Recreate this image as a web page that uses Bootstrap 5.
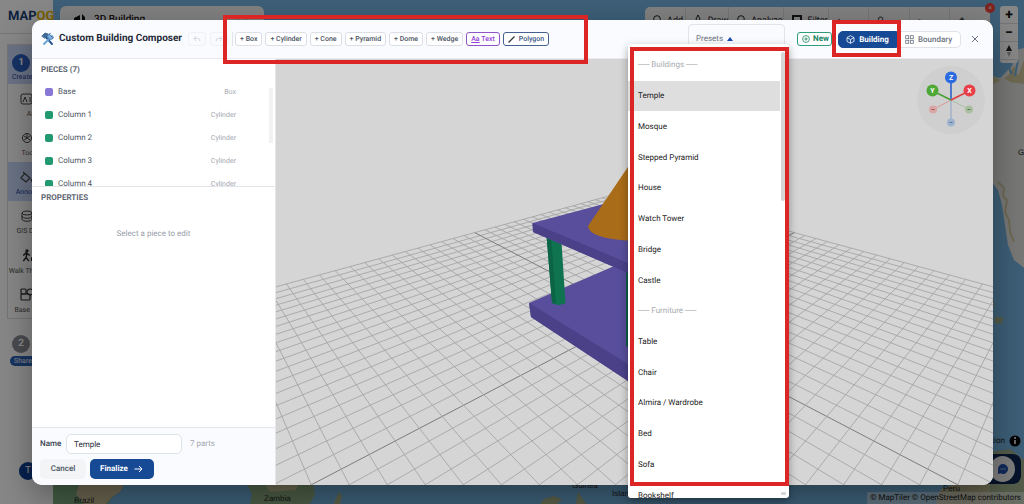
<!DOCTYPE html>
<html lang="en">
<head>
<meta charset="utf-8">
<meta name="viewport" content="width=device-width, initial-scale=1">
<title>Custom Building Composer</title>
<link href="https://cdn.jsdelivr.net/npm/bootstrap@5.3.0/dist/css/bootstrap.min.css" rel="stylesheet">
<style>
:root{--navy:#174a94;--line:#e2e5ea;--hint:#dc2626}
html,body{height:100%}
body{font-family:Roboto,"Liberation Sans",sans-serif;font-size:8px;line-height:12px;color:#374151;overflow:hidden;background:#7abbe9;text-rendering:geometricPrecision}
button,input{font-family:inherit;text-rendering:inherit}
svg{display:block}
/* application behind the dialog */
.backdrop-app{position:absolute;inset:0}
.map-art{position:absolute;inset:0;width:100%;height:100%}
.side-rail{width:53px;background:#fff;position:relative}
.brand-line{height:34px;font:bold 13px/34px Roboto,sans-serif;padding-left:8px;color:#1c3f77;border-bottom:1px solid #ddd}
.brand-line span{color:#e4b400}
.rail-box{margin:10px 0 0 7px;border:1px solid #ddd;font-size:7px;line-height:10px;color:#555}
.rail-item{height:39px;padding-top:9px;white-space:nowrap;text-align:center;width:44px}
.rail-item svg{margin:0 0 4px 12px}
.rail-on{background:#c9d9fb;color:#1c3f9a}
.step-dot{width:18px;height:18px;border-radius:50%;background:#2b5fc0;color:#fff;font:bold 10px/18px Roboto,sans-serif;text-align:center}
.share-tag{background:#2b62b8;color:#fff;border-radius:5px;font-size:7px;line-height:10px;width:26px;text-align:center}
.user-dot{width:18px;height:18px;border-radius:50%;background:#0d3f96;color:#fff;font-size:10px;line-height:18px;text-align:center}
.top-panel{margin:6px 0 0 7px;width:204px;height:40px;background:#f4f4f4;border-radius:6px;padding:8px 14px;font-size:10px;font-weight:500;color:#111}
.top-tools{position:absolute;left:63%;right:34px;top:7px;height:40px;background:#f4f4f4;border-radius:5px;font-size:9px;color:#222}
.top-tools>span{flex:1;border-right:1px solid #ddd;padding:8px 0 0 8px;gap:6px}
.alert-dot{position:absolute;right:-5px;top:-4px;width:10px;height:10px;border-radius:50%;background:#f0443c;color:#fff;font-size:7px;line-height:10px;text-align:center}
.zoom-stack{position:absolute;right:6px;top:6px;width:18px;border-radius:3px;background:#fff;overflow:hidden}
.zoom-stack button{height:18px;width:18px;border:0;border-bottom:1px solid #ddd;background:none;padding:0;font:bold 14px/16px Roboto,sans-serif;color:#111}
.map-info{position:absolute;right:3px;bottom:57px;color:#222;gap:4px}
.chat-box{position:absolute;right:3px;bottom:20px;width:50px;height:30px;border-radius:8px;background:#0d2450;padding:2px 6px}
.chat-face{width:25px;height:26px;border-radius:50%;background:#eee}
.credit{position:absolute;right:0;bottom:0;background:rgba(255,255,255,.45);padding:0 3px;color:#222}
.credit a{color:inherit;text-decoration:none}
.dim{position:absolute;inset:0;background:rgba(0,0,0,.47)}
/* dialog */
.composer{position:absolute;inset:20px 31px 19px 32px;border-radius:10px;background:#fff;box-shadow:0 12px 34px rgba(0,0,0,.35)}
.composer-head{height:39px;background:#fafbfe;border-bottom:1px solid #e9ebf0;border-radius:10px 10px 0 0;padding:0 14px 0 9px;position:relative;z-index:3}
.composer-title{font-size:10px;line-height:14px;font-weight:700;color:#1f2937;margin:0 0 0 4px;width:129px;white-space:nowrap}
.ghost-btn{width:18px;height:14px;padding:0;border:1px solid #f0f1f4;border-radius:3px;background:transparent;color:#d5d8de}
.tool-btn{height:14px;padding:0 4px;border:1px solid #dcdfe5;border-radius:3px;background:#fff;font-size:7px;line-height:12px;font-weight:500;color:#4b5563;white-space:nowrap}
.tool-text{border-color:#8f55c8;color:#9042d8}
.tool-poly{border-color:#45618f;color:#3b567f}
.shape-tools{gap:3px;border-left:1px solid #e2e5ea;padding-left:2px;position:relative}
.hint-box{position:absolute;border:4px solid var(--hint);pointer-events:none;z-index:6}
.hint-tools{inset:-17px auto -18px -10px;width:365px}
.hint-mode{inset:-11px 60px -9px -6px}
.hint-menu{inset:3px 0 12px 2px}
.preset-wrap{position:relative;height:30px;width:97px;margin-left:auto}
.preset-btn{width:100%;height:100%;border:1px solid #e2e4ea;border-radius:4px;background:#fafbfe;text-align:left;color:#6b7280;padding:0 7px;gap:4px}
.preset-menu{position:absolute;top:20px;left:-60px;width:161px;height:454px;border-radius:3px;background:#fff;box-shadow:0 3px 9px rgba(0,0,0,.35);z-index:5}
.preset-clip{height:100%;overflow:hidden;padding-top:6px;border-radius:3px}
.preset-list{height:461px;margin:0 9px 0 0;padding:0;list-style:none}
.preset-list li{flex:1;padding-left:10px;color:#222}
.preset-list li.group-name{color:#a8abb0}
.preset-list li.on{background:#dedede}
.menu-thumb{position:absolute;right:4px;top:8px;width:4px;height:149px;background:#d6d6d6;border-radius:2px}
.menu-end{position:absolute;right:3px;bottom:3px;width:5px;height:3px;border-radius:1px;background:#d6d6d6}
.new-btn{height:14px;width:35px;margin:0 6px 0 12px;padding:0 4px;border:1px solid #2e9c78;border-radius:3px;background:#fff;color:#16845f;line-height:12px;font-weight:700;gap:3px}
.new-btn svg{flex:none}
.mode-switch{position:relative;height:17px}
.mode-switch button{height:17px;line-height:15px;padding:0 9px;gap:4px;border:1px solid #dfe2e8;background:#fff;color:#6b7280;font-weight:500}
.mode-switch .mode-a{border-radius:5px 0 0 5px;background:var(--navy);border-color:var(--navy);color:#fff;font-weight:700;width:59px;justify-content:center;padding:0}
.mode-switch .mode-b{border-radius:0 5px 5px 0;border-left:0;width:64px;justify-content:center;padding:0}
.close-btn{border:0;background:none;padding:0;margin-left:10px;color:#6b7280}
.composer-body{height:calc(100% - 39px)}
.side-pane{width:244px;border-right:1px solid #e5e7eb}
.pieces-part{height:128px;border-bottom:1px solid var(--line);overflow:hidden;position:relative}
.pane-label{font-size:8px;line-height:12px;font-weight:700;color:#5f6774;margin:0;padding:5px 9px 4px}
.piece-row{height:23px;padding:0 39px 0 13px;color:#4b5563}
.piece-chip{width:8px;height:8px;border-radius:2px;background:#22996f;margin-right:5px}
.piece-kind{font-size:7px;color:#a3a8b1;margin-left:auto}
.pane-thumb{position:absolute;right:2px;top:29px;width:4px;height:55px;background:#f2f2f3}
.composer-foot{background:#fafbfe;border-top:1px solid var(--line);border-radius:0 0 0 10px;padding:6px 8px 6px;height:58px}
.name-label{width:26px}
.name-field{width:116px;height:20px;border:1px solid #dfe2e8;border-radius:5px;padding:0 7px;color:#1f2937;background:#fff}
.cancel-btn,.final-btn{height:20px;border:0;border-radius:5px;line-height:20px;font-weight:500;padding:0 10px}
.cancel-btn{background:#f3f4f6;color:#4b5563;width:46px}
.final-btn{background:var(--navy);color:#fff;font-weight:700;gap:6px;width:64px}
.scene{background:#d5d5d5;border-radius:0 0 10px 0;overflow:hidden;position:relative}
.scene svg{position:absolute;inset:0;width:100%;height:100%}
.scene .axis-gizmo{inset:6px 7px auto auto;width:70px;height:70px}
</style>
<script src="https://cdn.jsdelivr.net/npm/bootstrap@5.3.0/dist/js/bootstrap.bundle.min.js"></script>
</head>
<body>
<div class="backdrop-app d-flex" aria-hidden="true">
  <svg class="map-art" viewBox="0 0 1024 504" preserveAspectRatio="none">
    <rect width="1024" height="504" fill="#74b3e0"/>
    <path d="M53 480H126L120 492 112 497 108 504H53Z" fill="#7fae83"/>
    <path d="M80 480H126L120 492 112 497 106 504H84L76 494Z" fill="#c9bd96"/>
    <path d="M245 480H312L315 494 310 504H250L252 494Z" fill="#8fae83"/>
    <path d="M262 480H300L296 490 270 492Z" fill="#c3bd92"/>
    <path d="M335 500l4-8 3 4-2 8h-6ZM540 504l4-5 10-3 8 3-5 5ZM576 504l2-12 4 6 4 6Z" fill="#a9b38a"/>
    <path d="M936 504L940 490 958 482 990 480 1024 484V504Z" fill="#b9b58e"/>
    <path d="M990 452L1010 449 1024 460V504H990Z" fill="#9fae8a"/>
    <path d="M990 76L1000 78 1012 66 1016 50 1024 48V268L1014 260 1008 245 1005 225 1002 205 998 190 990 180Z" fill="#e2e2df"/>
    <path d="M990 74L1000 80 1008 76 1014 66 1018 76 1024 60V84L1010 82 1004 78 994 84 990 80Z" fill="#cfc69c"/>
    <path d="M996 60l8 14M1006 62l6 12M1018 60l-3 16" stroke="#74b3e0" stroke-width="2"/>
    <path d="M998 182l6 6-1 8 4 4-2 12 4 8 1 12 4 10" fill="none" stroke="#cfc69c" stroke-width="2"/>
    <path d="M993 301l2 6M995 317l8 1-2 5-6 0ZM1002 324h2" stroke="#9fae8a" fill="#9fae8a"/>
    <g font-family="Liberation Sans" font-size="8" fill="#222"><text x="74" y="503">Brazil</text><text x="264" y="501">Zambia</text><text x="572" y="488">Guinea</text><text x="612" y="496">Islands</text><text x="943" y="491">Peru</text><text x="1018" y="155">G</text></g>
  </svg>
  <div class="side-rail">
    <div class="brand-line">MAP<span>OG</span></div>
    <div class="rail-box">
      <div class="rail-item rail-on d-flex flex-column"><span class="step-dot ms-1">1</span><span class="text-start ps-1">Create</span></div>
      <div class="rail-item"><svg width="14" height="12" viewBox="0 0 14 12" fill="none" stroke="#444"><rect x="1" y="1" width="11" height="10" rx="2"/><path d="M3 9l2-5 2 5M10 4v5"/></svg>AI</div>
      <div class="rail-item"><svg width="14" height="12" viewBox="0 0 14 12" fill="none" stroke="#444"><circle cx="7" cy="6" r="4.5"/><path d="M4 4l6 4M4 8l6-4M7 2v3"/></svg>Tools</div>
      <div class="rail-item rail-on"><svg width="14" height="12" viewBox="0 0 14 12" fill="none" stroke="#444" stroke-width="1.2"><path d="M3 1l7 6-4 4-5-4 4-5M11 8l1 3"/></svg>Annotate</div>
      <div class="rail-item"><svg width="14" height="12" viewBox="0 0 14 12" fill="none" stroke="#444"><ellipse cx="7" cy="3" rx="5" ry="2"/><path d="M2 3v6c0 3 10 3 10 0V3M2 6c0 3 10 3 10 0"/></svg>GIS Data</div>
      <div class="rail-item"><svg width="14" height="13" viewBox="0 0 14 14" fill="none" stroke="#222" stroke-width="1.5"><circle cx="7" cy="2" r="1"/><path d="M7 4l-1 5-3 4M6 9l3 4M3 7l3-3 4 3M12 9v4"/></svg>Walk Through</div>
      <div class="rail-item"><svg width="14" height="13" viewBox="0 0 14 13" fill="none" stroke="#333" stroke-width="1.2"><rect x="1" y="1" width="5" height="5" rx="1"/><circle cx="10" cy="4" r="3"/><rect x="1" y="6" width="9" height="6" rx="1"/></svg>Base Map</div>
    </div>
    <div class="step-dot" style="margin:16px 0 3px 12px;background:#8c8f96">2</div>
    <div class="share-tag" style="margin-left:10px">Share</div>
    <div class="user-dot" style="margin:96px 0 0 19px">T</div>
  </div>
  <div class="top-panel position-relative d-flex gap-2"><svg width="12" height="12" viewBox="0 0 12 12"><path d="M0 4L6 1V12H0ZM8 0l3 3v9H8Z" fill="#111"/></svg>3D Building<span class="ms-auto">⌄⌄</span></div>
  <div class="top-tools d-flex">
    <span class="d-flex"><svg width="8" height="8" viewBox="0 0 8 8"><circle cx="4" cy="4" r="3.3" fill="none" stroke="#222"/></svg>Add</span>
    <span class="d-flex"><svg width="8" height="8" viewBox="0 0 8 8"><path d="M4 0L6 4 4 8 2 4Z" fill="none" stroke="#222"/></svg>Draw</span>
    <span class="d-flex"><svg width="8" height="8" viewBox="0 0 8 8"><circle cx="4" cy="4" r="3.3" fill="none" stroke="#222"/></svg>Analyze</span>
    <span class="d-flex"><svg width="10" height="8" viewBox="0 0 10 8"><path d="M0 1h10M1 1v6h8V1" fill="none" stroke="#222" stroke-width="2"/></svg>Filter</span>
    <span>▴</span><span>⚲</span><span>◦</span><span class="border-0">◈</span>
    <i class="alert-dot fst-normal">×</i>
  </div>
  <div class="zoom-stack"><button tabindex="-1">+</button><button tabindex="-1">−</button><button tabindex="-1"><svg class="mx-auto" width="6" height="12" viewBox="0 0 6 12"><path d="M3 0L6 6H0Z" fill="#222"/><path d="M3 12L5 7H1Z" fill="#aaa"/></svg></button></div>
  <div class="map-info d-flex align-items-center">Location <svg width="12" height="12" viewBox="0 0 12 12"><circle cx="6" cy="6" r="5.5" fill="#000"/><path d="M6 5v4" stroke="#fff" stroke-width="1.5"/><circle cx="6" cy="3" r="1" fill="#fff"/></svg></div>
  <div class="chat-box d-flex justify-content-end"><span class="chat-face d-flex align-items-center justify-content-center"><svg width="12" height="12" viewBox="0 0 12 12"><path d="M6 1a5 5 0 1 1-2.500 9.300L1 11V6A5 5 0 0 1 6 1Z" fill="#1d4faa"/><path d="M3.500 6h5" stroke="#fff" stroke-dasharray="1 1"/></svg></span></div>
  <div class="credit"><a href="#" tabindex="-1">© MapTiler</a> <a href="#" tabindex="-1">© OpenStreetMap contributors</a></div>
  <div class="dim"></div>
</div>

<main class="composer" role="dialog" aria-labelledby="composer-title">
  <header class="composer-head d-flex align-items-center">
    <svg width="14" height="14" viewBox="0 0 14 14" fill="none" stroke-linecap="round"><path d="M3 3l8 9" stroke="#2b5c94" stroke-width="2"/><path d="M1 4l3-3 3 1-1 1 .5 1L4 6Z" fill="#3d6e9e" stroke="#2b4f75" stroke-width=".7"/><path d="M11 4L3 12" stroke="#6ea4d8" stroke-width="2"/><path d="M9 1.500a3 3 0 1 0 3.500 3.500L11 5 9 3Z" fill="#7fb2e0" stroke="#2b5c94" stroke-width=".7"/></svg>
    <h1 class="composer-title" id="composer-title">Custom Building Composer</h1>
    <div class="d-flex gap-1">
      <button class="ghost-btn" aria-label="Undo" disabled><svg class="mx-auto" width="8" height="8" viewBox="0 0 8 8" fill="none" stroke="currentColor"><path d="M3 1L1 3.500 3 6M1 3.500h4q2 0 2 3"/></svg></button>
      <button class="ghost-btn" aria-label="Redo" disabled><svg class="mx-auto" width="8" height="8" viewBox="0 0 8 8" fill="none" stroke="currentColor"><path d="M5 1l2 2.500L5 6M7 3.500H3q-2 0-2 3"/></svg></button>
    </div>
    <div class="shape-tools d-flex ms-1">
      <button class="tool-btn">+ Box</button><button class="tool-btn">+ Cylinder</button><button class="tool-btn">+ Cone</button><button class="tool-btn">+ Pyramid</button><button class="tool-btn">+ Dome</button><button class="tool-btn">+ Wedge</button>
      <button class="tool-btn tool-text"><u>Aa</u> Text</button>
      <button class="tool-btn tool-poly d-flex align-items-center gap-1"><svg width="7" height="7" viewBox="0 0 7 7"><path d="M.5 6.500L6.500 .5" stroke="#333" stroke-width="1.300"/></svg>Polygon</button>
      <span class="hint-box hint-tools"></span>
    </div>
    <div class="preset-wrap">
      <button class="preset-btn d-flex align-items-center" aria-haspopup="listbox" aria-expanded="true">Presets <svg width="6" height="4" viewBox="0 0 6 4"><path d="M0 4L3 0 6 4Z" fill="#1548b0"/></svg></button>
      <div class="preset-menu">
        <div class="preset-clip">
          <ul class="preset-list d-flex flex-column" role="listbox" aria-label="Presets">
            <li class="group-name d-flex align-items-center">── Buildings ──</li>
            <li class="on d-flex align-items-center" role="option" aria-selected="true">Temple</li>
            <li class="d-flex align-items-center" role="option">Mosque</li>
            <li class="d-flex align-items-center" role="option">Stepped Pyramid</li>
            <li class="d-flex align-items-center" role="option">House</li>
            <li class="d-flex align-items-center" role="option">Watch Tower</li>
            <li class="d-flex align-items-center" role="option">Bridge</li>
            <li class="d-flex align-items-center" role="option">Castle</li>
            <li class="group-name d-flex align-items-center">── Furniture ──</li>
            <li class="d-flex align-items-center" role="option">Table</li>
            <li class="d-flex align-items-center" role="option">Chair</li>
            <li class="d-flex align-items-center" role="option">Almira / Wardrobe</li>
            <li class="d-flex align-items-center" role="option">Bed</li>
            <li class="d-flex align-items-center" role="option">Sofa</li>
            <li class="d-flex align-items-center" role="option">Bookshelf</li>
          </ul>
        </div>
        <i class="menu-thumb"></i><i class="menu-end"></i>
        <span class="hint-box hint-menu"></span>
      </div>
    </div>
    <button class="new-btn d-flex align-items-center"><svg width="8" height="8" viewBox="0 0 8 8" fill="none" stroke="currentColor" stroke-width=".8"><circle cx="4" cy="4" r="3.400"/><path d="M4 2.300v3.400M2.300 4h3.400"/></svg>New</button>
    <div class="mode-switch d-flex">
      <button class="mode-a d-flex align-items-center"><svg width="9" height="9" viewBox="0 0 9 9" fill="none" stroke="currentColor" stroke-width=".8"><path d="M4.500 .7L8 2.600v3.800L4.500 8.300 1 6.400V2.600ZM1 2.600l3.500 2L8 2.600M4.500 4.600v3.700"/></svg>Building</button>
      <button class="mode-b d-flex align-items-center"><svg width="9" height="9" viewBox="0 0 9 9" fill="none" stroke="currentColor" stroke-width=".8"><rect x=".7" y=".7" width="3" height="3"/><rect x="5.300" y=".7" width="3" height="3"/><rect x=".7" y="5.300" width="3" height="3"/><rect x="5.300" y="5.300" width="3" height="3"/></svg>Boundary</button>
      <span class="hint-box hint-mode"></span>
    </div>
    <button class="close-btn" aria-label="Close"><svg width="8" height="8" viewBox="0 0 8 8" stroke="currentColor"><path d="M1 1l6 6M7 1L1 7"/></svg></button>
  </header>
  <div class="composer-body d-flex">
    <aside class="side-pane d-flex flex-column flex-shrink-0">
      <section class="pieces-part">
        <h2 class="pane-label">PIECES (7)</h2>
        <div class="piece-row d-flex align-items-center"><i class="piece-chip" style="background:#8a78d6"></i>Base<span class="piece-kind">Box</span></div>
        <div class="piece-row d-flex align-items-center"><i class="piece-chip"></i>Column 1<span class="piece-kind">Cylinder</span></div>
        <div class="piece-row d-flex align-items-center"><i class="piece-chip"></i>Column 2<span class="piece-kind">Cylinder</span></div>
        <div class="piece-row d-flex align-items-center"><i class="piece-chip"></i>Column 3<span class="piece-kind">Cylinder</span></div>
        <div class="piece-row d-flex align-items-center"><i class="piece-chip"></i>Column 4<span class="piece-kind">Cylinder</span></div>
        <i class="pane-thumb"></i>
      </section>
      <section class="flex-grow-1">
        <h2 class="pane-label">PROPERTIES</h2>
        <p class="text-center mb-0 mt-3 pt-1" style="color:#9aa0aa">Select a piece to edit</p>
      </section>
      <footer class="composer-foot d-flex flex-column justify-content-between">
        <div class="d-flex align-items-center"><label class="fw-medium name-label" for="model-name">Name</label><input class="name-field" id="model-name" value="Temple"><span class="ms-1 ps-1" style="color:#a3a8b1">7 parts</span></div>
        <div class="d-flex gap-1"><button class="cancel-btn">Cancel</button><button class="final-btn d-flex align-items-center">Finalize <svg width="9" height="8" viewBox="0 0 9 8" fill="none" stroke="#fff"><path d="M.5 4h7.500M5 1l3 3-3 3"/></svg></button></div>
      </footer>
    </aside>
    <section class="scene flex-grow-1">
      <svg viewBox="276 59 717 426" preserveAspectRatio="xMidYMid slice" aria-label="3D preview">
        <g id="floor" fill="none"></g>
        <path d="M529 303L612 267 700 235 700 400 628 381 531 317Z" fill="#584e9c"/>
        <path d="M529 303L628 364 628 381 531 317Z" fill="#4a4189"/>
        <path d="M626 268H640V352L626 346Z" fill="#0b5e4a"/>
        <path d="M546.500 235H561L565.500 303Q558 307 552 303Z" fill="#0f7350"/>
        <path d="M546.500 235H551L556 304 552 303Z" fill="#0b6445"/>
        <path d="M532.500 223L600 205 700 175V300L628 273 533 232Z" fill="#584e9c"/>
        <path d="M532.500 223L628 263 628 273 533 232Z" fill="#4a4189"/>
        <path d="M634 158L588 226Q589 239 634 241Z" fill="#a96c18"/>
      </svg>
      <svg class="axis-gizmo" viewBox="0 0 70 70">
        <circle cx="35" cy="35" r="34" fill="#cfcfcf"/>
        <path d="M35 35L17 44.500" stroke="#d99a9a"/><path d="M35 35L53 44.500" stroke="#a9c1a0"/><path d="M35 35V58" stroke="#8da4c8"/>
        <g stroke-width="1.600"><path d="M35 35V14" stroke="#2a62c8"/><path d="M35 35L17 26" stroke="#4aa035"/><path d="M35 35L53 26" stroke="#e04045"/></g>
        <circle cx="17" cy="44.500" r="4" fill="#d9a5a5"/><circle cx="53" cy="44.500" r="4" fill="#a9bfa0"/><circle cx="35" cy="57.500" r="4" fill="#9fb2cc"/>
        <path d="M15.500 44.500h3" stroke="#a55"/><path d="M51.500 44.500h3" stroke="#575"/><path d="M33.500 57.500h3" stroke="#57a"/>
        <circle cx="35" cy="12.500" r="6" fill="#2a6be0"/><circle cx="16.500" cy="25.500" r="6" fill="#4ea836"/><circle cx="53.500" cy="25.500" r="6" fill="#e84048"/>
        <g fill="#fff" font-size="7" font-weight="700" text-anchor="middle"><text x="35" y="15">Z</text><text x="16.500" y="28">Y</text><text x="53.500" y="28">X</text></g>
      </svg>
    </section>
  </div>
</main>
<script>
// Floor grid: 40 x 40 cells, seen along its diagonal. a and b run from -1 to 1.
const floor = document.getElementById('floor');
const project = (a, b) => {
  const w = 1 - 0.4565 * (a + b);
  return [634.5 + 232.75 * (a - b) / w, 316 + 121.5 * (a + b) / w];
};
const draw = (p, q, axis) => {
  const l = document.createElementNS('http://www.w3.org/2000/svg', 'path');
  l.setAttribute('d', `M${p[0].toFixed(1)} ${p[1].toFixed(1)}L${q[0].toFixed(1)} ${q[1].toFixed(1)}`);
  l.setAttribute('stroke', axis ? '#7c7c7c' : '#a6a6a6');
  l.setAttribute('stroke-width', axis ? '1' : '.9');
  floor.append(l);
};
for (let i = -20; i <= 20; i++) {
  const k = i / 20;
  draw(project(k, -1), project(k, 1), i === 0);
  draw(project(-1, k), project(1, k), i === 0);
}
</script>
</body>
</html>
